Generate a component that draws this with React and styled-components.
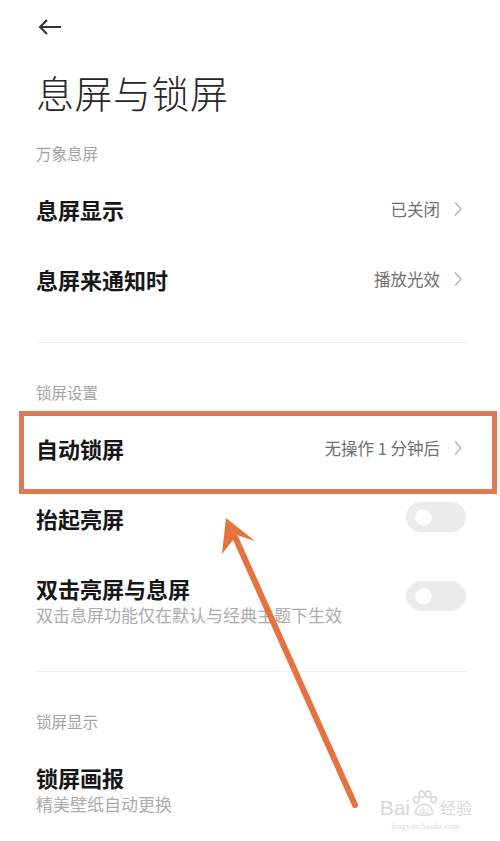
import React from "react";
import styled, { createGlobalStyle } from "styled-components";

const Global = createGlobalStyle`
  html, body { margin: 0; padding: 0; background: #fff; }
  body { font-family: "Noto Sans CJK SC", "Noto Sans", sans-serif; color: #1a1a1a; }
  * { box-sizing: border-box; }
`;

const Screen = styled.div`
  position: relative;
  width: 500px;
  height: 841px;
  overflow: hidden;
  background: #fff;
`;

const Content = styled.div`
  padding: 0 34px 0 36px;
  display: flex;
  flex-direction: column;
`;

const TopBar = styled.div`
  height: 54px;
  display: flex;
  align-items: center;
  padding-left: 1px;
`;

const PageTitle = styled.h1`
  margin: 13px 0 0;
  height: 50px;
  line-height: 50px;
  font-size: 38px;
  font-weight: 300;
  color: #262626;
  letter-spacing: 0.5px;
`;

const Section = styled.section`
  display: flex;
  flex-direction: column;
  padding-top: ${(p) => p.$top}px;
  padding-bottom: ${(p) => p.$bottom || 0}px;
`;

const SectionLabel = styled.div`
  height: 20px;
  line-height: 20px;
  font-size: 15.5px;
  color: #a3a3a3;
  margin-bottom: 11px;
`;

const Divider = styled.div`
  height: 1px;
  background: #ededed;
`;

const RowWrap = styled.div`
  position: relative;
`;

const Row = styled.div`
  display: flex;
  align-items: center;
  justify-content: space-between;
  min-height: 70px;
  padding: ${(p) => (p.$twoLine ? "21px 0 17px" : "0")};
`;

const TextCol = styled.div`
  display: flex;
  flex-direction: column;
`;

const RowTitle = styled.div`
  font-size: 22px;
  line-height: 28px;
  font-weight: 700;
  color: #161616;
  margin-top: ${(p) => p.$shift || 0}px;
`;

const RowSub = styled.div`
  font-size: 17px;
  line-height: 22px;
  color: #acacac;
  margin-top: 2px;
`;

const ValueGroup = styled.div`
  display: flex;
  align-items: center;
  gap: 13px;
  color: #707070;
  font-size: 16.5px;
  margin-top: ${(p) => p.$shift || 0}px;
`;

const Chevron = styled.svg`
  width: 10px;
  height: 16px;
  margin-right: 3px;
`;

const Toggle = styled.div`
  width: 60px;
  height: 30px;
  border-radius: 15px;
  background: #ebebeb;
  display: flex;
  align-items: center;
  padding-left: 9px;
  margin-top: ${(p) => p.$shift || 0}px;
`;

const Knob = styled.div`
  width: 17px;
  height: 17px;
  border-radius: 50%;
  background: #fdfdfd;
  box-shadow: 0 0 1px rgba(0, 0, 0, 0.08);
`;

const Highlight = styled.div`
  position: absolute;
  left: -17px;
  right: -31px;
  top: -2px;
  bottom: -11px;
  border: 5px solid #db7a54;
  pointer-events: none;
`;

const Annotation = styled.svg`
  position: absolute;
  left: 0;
  top: 0;
  width: 500px;
  height: 841px;
  pointer-events: none;
`;

const Watermark = styled.div`
  position: absolute;
  right: 28px;
  bottom: 10px;
  display: flex;
  flex-direction: column;
  align-items: center;
  color: #d9d9d9;
  font-family: "Liberation Sans", sans-serif;
`;

const WmTop = styled.div`
  display: flex;
  align-items: flex-end;
  gap: 1px;
  font-size: 21px;
  line-height: 21px;
`;

const WmSub = styled.div`
  font-family: "Liberation Serif", serif;
  font-size: 8.5px;
  letter-spacing: 0.3px;
  margin-top: 3px;
`;

const WmCn = styled.span`
  font-family: "Noto Sans CJK SC", sans-serif;
  font-size: 16px;
  margin-left: 2px;
`;

const ChevronIcon = () => (
  <Chevron viewBox="0 0 10 16">
    <path d="M2 1.5 L8 8 L2 14.5" fill="none" stroke="#b5b5b5" strokeWidth="1.4" />
  </Chevron>
);

const NavRow = ({ title, value, shift }) => (
  <Row>
    <RowTitle $shift={shift}>{title}</RowTitle>
    <ValueGroup $shift={shift}>
      <span>{value}</span>
      <ChevronIcon />
    </ValueGroup>
  </Row>
);

const SwitchRow = ({ title, sub }) => (
  <Row $twoLine={!!sub}>
    <TextCol>
      <RowTitle>{title}</RowTitle>
      {sub && <RowSub>{sub}</RowSub>}
    </TextCol>
    <Toggle $shift={sub ? -8 : -2}>
      <Knob />
    </Toggle>
  </Row>
);

export default function App() {
  return (
    <Screen>
      <Global />
      <Content>
        <TopBar>
          <svg width="26" height="18" viewBox="0 0 26 18">
            <path d="M24 9 H3 M10 2 L3 9 L10 16" fill="none" stroke="#333" strokeWidth="2" />
          </svg>
        </TopBar>
        <PageTitle>息屏与锁屏</PageTitle>

        <Section $top={26} $bottom={28}>
          <SectionLabel>万象息屏</SectionLabel>
          <NavRow title="息屏显示" value="已关闭" />
          <NavRow title="息屏来通知时" value="播放光效" />
        </Section>
        <Divider />

        <Section $top={39} $bottom={28}>
          <SectionLabel>锁屏设置</SectionLabel>
          <RowWrap>
            <NavRow title="自动锁屏" value="无操作 1 分钟后" />
            <Highlight />
          </RowWrap>
          <SwitchRow title="抬起亮屏" />
          <SwitchRow title="双击亮屏与息屏" sub="双击息屏功能仅在默认与经典主题下生效" />
        </Section>
        <Divider />

        <Section $top={39}>
          <SectionLabel>锁屏显示</SectionLabel>
          <Row $twoLine>
            <TextCol>
              <RowTitle>锁屏画报</RowTitle>
              <RowSub>精美壁纸自动更换</RowSub>
            </TextCol>
          </Row>
        </Section>
      </Content>

      <Annotation viewBox="0 0 500 841">
        <line x1="355" y1="805" x2="235" y2="537" stroke="#e6723f" strokeWidth="6" strokeLinecap="round" />
        <polygon points="226,518 255,541 237,535 222,554" fill="#e6723f" />
      </Annotation>

      <Watermark>
        <WmTop>
          <span>Bai</span>
          <svg width="26" height="28" viewBox="0 0 24 26">
            <g fill="none" stroke="#d9d9d9" strokeWidth="1.5">
              <ellipse cx="5" cy="9" rx="2.5" ry="3" />
              <ellipse cx="10" cy="4" rx="2.5" ry="3" />
              <ellipse cx="16" cy="4" rx="2.5" ry="3" />
              <ellipse cx="21" cy="9" rx="2.3" ry="3" />
              <path d="M4 22 Q4 14 12 13 Q20 14 20 22 Q12 25 4 22 Z" />
            </g>
            <text x="12" y="22" fontSize="8" textAnchor="middle" fill="#d9d9d9" fontFamily="Liberation Sans">du</text>
          </svg>
          <WmCn>经验</WmCn>
        </WmTop>
        <WmSub>jingyan.baidu.com</WmSub>
      </Watermark>
    </Screen>
  );
}
